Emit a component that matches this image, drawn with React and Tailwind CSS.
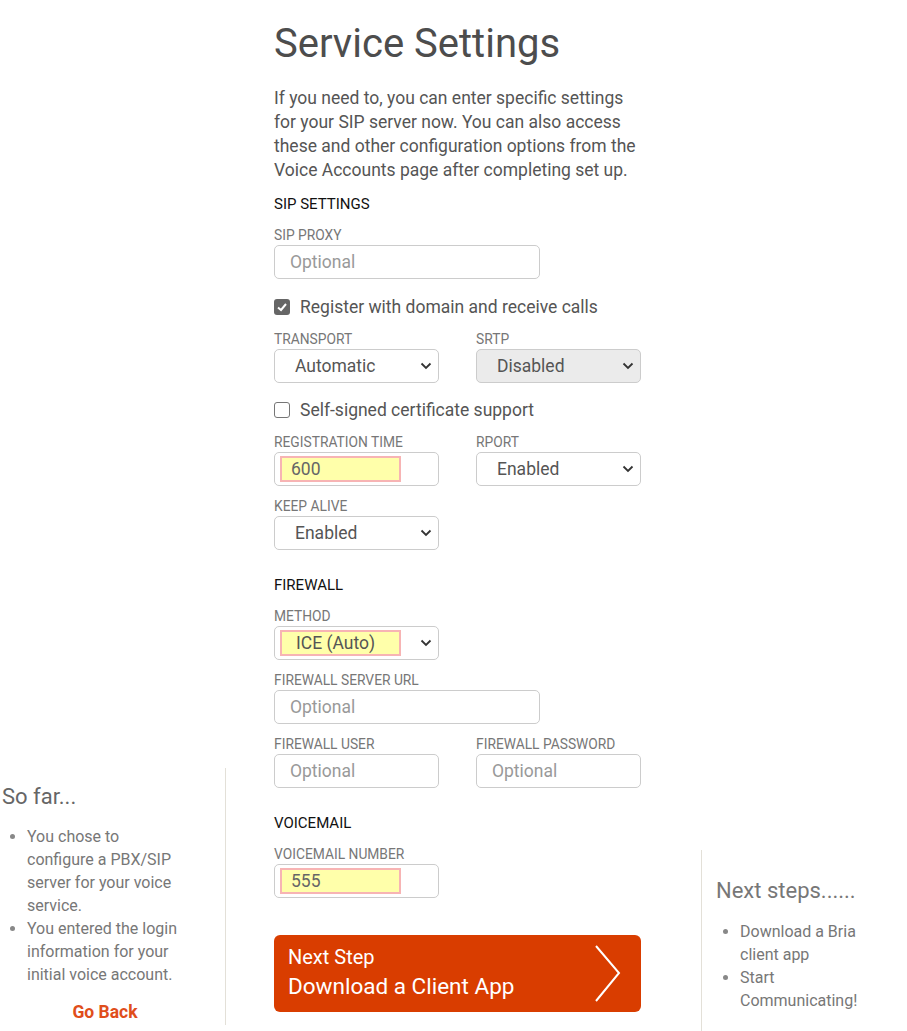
function Chevron() {
  return (
    <svg width="12" height="8" viewBox="0 0 12 8" className="shrink-0">
      <polyline points="1.5,1.5 6,6 10.5,1.5" fill="none" stroke="#333" strokeWidth="1.8" />
    </svg>
  );
}

function Label({ children }) {
  return <div className="h-[19px] text-[13.8px] leading-[18px] text-[#777] uppercase">{children}</div>;
}

function TextField({ placeholder, value, wide, highlight }) {
  return (
    <div className={`${wide ? "w-[266px]" : "w-[165px]"} h-[34px] border border-[#ccc] rounded-[5px] bg-white flex items-center`}>
      {highlight ? (
        <div className="ml-[5px] w-[121px] h-[26px] bg-[#ffffaa] border-2 border-[#f7b4b4] flex items-center pl-[9px] text-[17.5px] text-[#666]">
          {value}
        </div>
      ) : (
        <span className="pl-[15px] text-[17.5px] text-[#999]">{placeholder}</span>
      )}
    </div>
  );
}

function Select({ value, disabled, highlight }) {
  return (
    <div
      className={`w-[165px] h-[34px] border border-[#ccc] rounded-[5px] flex items-center justify-between pr-[6px] ${
        disabled ? "bg-[#ebebeb]" : "bg-white"
      }`}
    >
      {highlight ? (
        <div className="ml-[5px] w-[121px] h-[26px] bg-[#ffffaa] border-2 border-[#f7b4b4] flex items-center pl-[14px] text-[17.5px] text-[#555]">
          {value}
        </div>
      ) : (
        <span className="pl-[20px] text-[17.5px] text-[#555]">{value}</span>
      )}
      <Chevron />
    </div>
  );
}

function Group({ label, children, mt = "mt-[11px]" }) {
  return (
    <div className={mt}>
      <Label>{label}</Label>
      {children}
    </div>
  );
}

function Heading({ children, mt = "mt-[25px]" }) {
  return <div className={`${mt} h-5 leading-5 text-[15px] text-[#111] uppercase`}>{children}</div>;
}

function Check({ checked, children, mt = "mt-[16px]" }) {
  return (
    <div className={`${mt} h-6 flex items-center`}>
      {checked ? (
        <div className="w-4 h-4 rounded-[3px] bg-[#666] flex items-center justify-center">
          <svg width="12" height="12" viewBox="0 0 12 12">
            <polyline points="2,6.5 5,9 10,3" fill="none" stroke="white" strokeWidth="2" />
          </svg>
        </div>
      ) : (
        <div className="w-4 h-4 rounded-[3px] border border-[#767676] bg-white" />
      )}
      <span className="ml-[10px] text-[17.5px] text-[#555]">{children}</span>
    </div>
  );
}

export default function App() {
  return (
    <div className="flex w-[907px] min-h-[1031px] bg-white font-['Roboto',sans-serif] overflow-hidden">
      {/* left sidebar */}
      <div className="w-[226px] shrink-0 pt-[768px]">
        <div className="h-[257px] border-r border-[#e3e0d8] pl-[2px] pt-[15px]">
          <div className="w-[206px]">
            <h3 className="text-[22px] leading-[28px] text-[#666]">So far...</h3>
            <ul className="mt-[14px] list-disc pl-[25px] pr-[25px] text-[16px] leading-[23px] text-[#777] marker:text-[#888]">
              <li>You chose to configure a PBX/SIP server for your voice service.</li>
              <li>You entered the login information for your initial voice account.</li>
            </ul>
            <div className="mt-[14px] text-center text-[17.5px] leading-6 font-bold text-[#e04e1b]">Go Back</div>
          </div>
        </div>
      </div>

      {/* main */}
      <div className="ml-[48px] w-[367px] shrink-0 pt-[20px] flex flex-col items-start">
        <h1 className="text-[40px] leading-[48px] text-[#4d4d4d]">Service Settings</h1>
        <p className="mt-[18px] text-[17.5px] leading-6 text-[#555]">
          If you need to, you can enter specific settings for your SIP server now. You can also access these and other
          configuration options from the Voice Accounts page after completing set up.
        </p>

        <Heading mt="mt-[12px]">SIP Settings</Heading>
        <Group label="SIP Proxy" mt="mt-[12px]">
          <TextField placeholder="Optional" wide />
        </Group>
        <Check checked>Register with domain and receive calls</Check>
        <div className="mt-[11px] flex gap-[37px]">
          <Group label="Transport" mt="mt-0">
            <Select value="Automatic" />
          </Group>
          <Group label="SRTP" mt="mt-0">
            <Select value="Disabled" disabled />
          </Group>
        </div>
        <Check mt="mt-[15px]">Self-signed certificate support</Check>
        <div className="mt-[11px] flex gap-[37px]">
          <Group label="Registration Time" mt="mt-0">
            <TextField value="600" highlight />
          </Group>
          <Group label="RPORT" mt="mt-0">
            <Select value="Enabled" />
          </Group>
        </div>
        <Group label="Keep Alive">
          <Select value="Enabled" />
        </Group>

        <Heading>Firewall</Heading>
        <Group label="Method" mt="mt-[12px]">
          <Select value="ICE (Auto)" highlight />
        </Group>
        <Group label="Firewall Server URL">
          <TextField placeholder="Optional" wide />
        </Group>
        <div className="mt-[11px] flex gap-[37px]">
          <Group label="Firewall User" mt="mt-0">
            <TextField placeholder="Optional" />
          </Group>
          <Group label="Firewall Password" mt="mt-0">
            <TextField placeholder="Optional" />
          </Group>
        </div>

        <Heading>Voicemail</Heading>
        <Group label="Voicemail Number" mt="mt-[12px]">
          <TextField value="555" highlight />
        </Group>

        <button
          type="button"
          className="mt-[37px] w-[367px] h-[77px] rounded-[6px] bg-[#d93d00] flex items-center justify-between pl-[14px] pr-[20px] text-left text-white"
        >
          <div>
            <div className="text-[20px] leading-6">Next Step</div>
            <div className="text-[22.5px] leading-[34px]">Download a Client App</div>
          </div>
          <svg width="28" height="58" viewBox="0 0 28 58">
            <polyline points="3,1 26,28 3,56" fill="none" stroke="white" strokeWidth="2" />
          </svg>
        </button>
      </div>

      {/* right sidebar */}
      <div className="ml-[60px] w-[180px] shrink-0 pt-[850px]">
        <div className="h-[181px] border-l border-[#e3e0d8] pl-[14px] pt-[28px]">
          <h3 className="text-[22px] leading-[26px] text-[#777]">Next steps......</h3>
          <ul className="mt-[16px] list-disc pl-[24px] pr-[20px] text-[16px] leading-[23px] text-[#777] marker:text-[#888]">
            <li>Download a Bria client app</li>
            <li>Start Communicating!</li>
          </ul>
        </div>
      </div>
    </div>
  );
}
